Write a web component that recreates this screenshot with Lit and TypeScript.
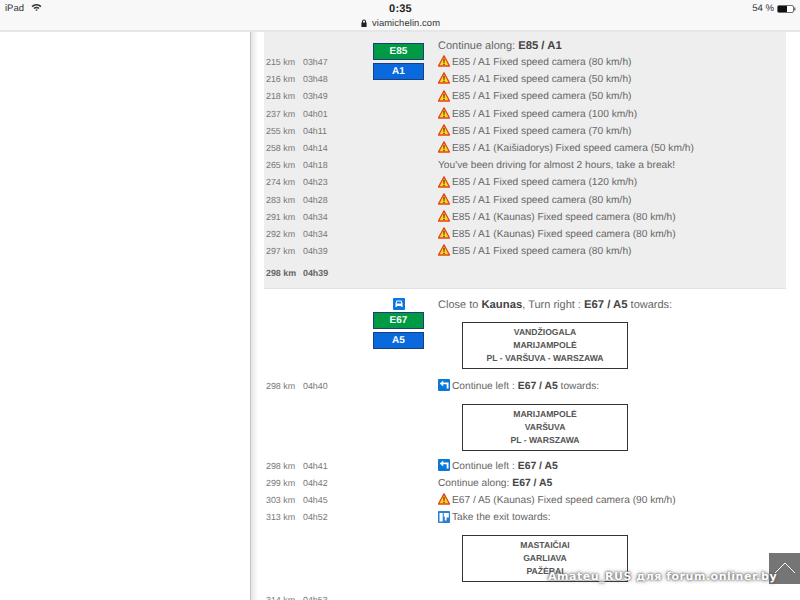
import { LitElement, html, css, svg } from "lit";
import { customElement } from "lit/decorators.js";

const warn = html`<svg class="ic" viewBox="0 0 12 12"><path d="M6 .8 11.5 11H.5Z" fill="#ffd81e" stroke="#e8431a" stroke-width="1.3" stroke-linejoin="round"/><path d="M5.4 3.8h1.2l-.2 4.2h-.8ZM5.4 8.8h1.2v1.2H5.4Z" fill="#222"/></svg>`;
const turn = html`<svg class="ic" viewBox="0 0 12 12"><rect width="12" height="12" rx="1" fill="#0a78d6"/><path d="M9.6 9.5V4.4H4.5" fill="none" stroke="#fff" stroke-width="1.9"/><path d="M5.2 1.4 1.8 4.4l3.4 3Z" fill="#fff"/></svg>`;
const exit = html`<svg class="ic" viewBox="0 0 12 12"><rect width="12" height="12" rx="1" fill="#2a80cf"/><path d="M1.5 2h3.2v8.5H1.5ZM5.8 2h5v4.5H8.5v3H6.8V5.2L5.8 6Z" fill="#fff"/></svg>`;
const car = svg`<rect width="12" height="12" rx="1" fill="#0a78e0"/><path d="M3.5 2.5h5l1 3v3.5H8.2V8H3.8v1H2.5V5.5Z" fill="#fff"/><path d="M4.2 3.5h3.6l.5 2H3.7Z" fill="#0a78e0"/>`;

type Row = { km?: string; t?: string; ic?: unknown; body?: unknown; big?: boolean; bold?: boolean; sign?: string[]; h?: number; pad?: [number, number] };

const cam = (s: string, km: string, t: string): Row => ({ km, t, ic: warn, body: `E85 / A1 ${s}` });

const top: Row[] = [
  { big: true, body: html`Continue along: <b>E85 / A1</b>`, h: 15 },
  cam("Fixed speed camera (80 km/h)", "215 km", "03h47"),
  cam("Fixed speed camera (50 km/h)", "216 km", "03h48"),
  cam("Fixed speed camera (50 km/h)", "218 km", "03h49"),
  cam("Fixed speed camera (100 km/h)", "237 km", "04h01"),
  cam("Fixed speed camera (70 km/h)", "255 km", "04h11"),
  cam("(Kaišiadorys) Fixed speed camera (50 km/h)", "258 km", "04h14"),
  { km: "265 km", t: "04h18", body: "You've been driving for almost 2 hours, take a break!" },
  cam("Fixed speed camera (120 km/h)", "274 km", "04h23"),
  cam("Fixed speed camera (80 km/h)", "283 km", "04h28"),
  cam("(Kaunas) Fixed speed camera (80 km/h)", "291 km", "04h34"),
  cam("(Kaunas) Fixed speed camera (80 km/h)", "292 km", "04h34"),
  cam("Fixed speed camera (80 km/h)", "297 km", "04h39"),
  { km: "298 km", t: "04h39", bold: true, h: 26 },
];

const second: Row[] = [
  { big: true, body: html`Close to <b>Kaunas</b>, Turn right : <b>E67 / A5</b> towards:`, sign: ["VANDŽIOGALA", "MARIJAMPOLĖ", "PL - VARŠUVA - WARSZAWA"], pad: [7, 9] },
  { km: "298 km", t: "04h40", ic: turn, body: html`Continue left : <b>E67 / A5</b> towards:`, sign: ["MARIJAMPOLĖ", "VARŠUVA", "PL - WARSZAWA"], pad: [9, 7] },
  { km: "298 km", t: "04h41", ic: turn, body: html`Continue left : <b>E67 / A5</b>` },
  { km: "299 km", t: "04h42", body: html`Continue along: <b>E67 / A5</b>` },
  { km: "303 km", t: "04h45", ic: warn, body: "E67 / A5 (Kaunas) Fixed speed camera (90 km/h)" },
  { km: "313 km", t: "04h52", ic: exit, body: "Take the exit towards:", sign: ["MASTAIČIAI", "GARLIAVA", "PAŽĖRAI"], pad: [8, 10] },
  { km: "314 km", t: "04h53" },
];

@customElement("app-root")
export class AppRoot extends LitElement {
  static styles = css`
    :host { display: block; width: 800px; height: 600px; position: relative; overflow: hidden; background: #fff;
      font-family: "Liberation Sans", Arial, sans-serif; color: #666; text-rendering: geometricPrecision; }
    .status { height: 27px; background: #f8f8f8; border-bottom: 2px solid #e6e6e6; display: grid; grid-template-columns: 1fr auto 1fr; padding: 3px 4px 0 5px; color: #333; }
    .left { display: flex; gap: 7px; align-items: flex-start; font-size: 9.5px; line-height: 11px; }
    .mid { text-align: center; }
    .clock { font-size: 11px; font-weight: bold; line-height: 12px; color: #222; letter-spacing: .2px; }
    .url { font-size: 9.4px; line-height: 12px; margin-top: 2px; display: flex; align-items: center; justify-content: center; gap: 5px; color: #333; letter-spacing: .1px; }
    .right { display: flex; justify-content: flex-end; align-items: flex-start; gap: 3px; font-size: 9.6px; line-height: 11px; }
    .body { display: flex; height: 568px; }
    .side { width: 250px; flex: none; background: #fff; }
    .main { flex: 1; padding: 0 14px 0 13px; border-left: 1px solid #c4c4c4; background: linear-gradient(to right, #e4e4e4, #fff 7px); min-width: 0; }
    .sec { display: grid; grid-template-columns: 39px 70px 65px 1fr; grid-auto-rows: auto; }
    .grey { background: #eee; border-bottom: 1px solid #e2e2e2; padding: 7px 0 2px; }
    .plain { padding: 8px 0 0; }
    .km, .time { font-size: 8.9px; line-height: 17.2px; color: #777; }
    .km { padding-left: 2px; }
    .strong { font-weight: bold; color: #666; }
    .roads { grid-column: 3; display: flex; flex-direction: column; gap: 3px; width: 51px; align-items: center; }
    .grey .roads { padding-top: 4px; }
    .plain .roads { padding-top: 1px; }
    .shield { width: 51px; height: 17px; box-sizing: border-box; border: 1px solid #1c3f7c; color: #fff; font-size: 10px; font-weight: bold; line-height: 15px; text-align: center; }
    .g { background: #009a44; }
    .b { background: #0a69dc; }
    .car { width: 12px; height: 12px; margin-bottom: -1px; display: block; }
    .txt { grid-column: 4; font-size: 10.2px; line-height: 17.2px; display: flex; align-items: center; gap: 2px; white-space: nowrap; height: 17.2px; }
    .txt b { color: #444; font-size: 10.4px; }
    .big { font-size: 11px; }
    .big b { font-size: 11.3px; }
    .ic { width: 12px; height: 12px; flex: none; margin-top: -3px; }
    .signcell { grid-column: 4; padding-left: 24px; }
    .sign { width: 166px; height: 47px; box-sizing: border-box; border: 1px solid #333; background: #fff; padding-top: 3px; text-align: center; font-size: 8.6px; font-weight: bold; line-height: 13.3px; color: #555; }
    .up { position: absolute; left: 769px; top: 553px; width: 31px; height: 31px; background: #757575; }
    .up svg { display: block; }
    .mark { position: absolute; left: 548px; top: 569px; font-family: "DejaVu Sans", sans-serif; font-weight: bold; font-size: 11px; line-height: 16px; color: #fff; white-space: nowrap; letter-spacing: .52px;
      text-shadow: 0 0 2px #444, 0 0 4px #666; }
  `;

  private renderRows(rows: Row[], start = 1) {
    let r = start;
    return rows.map((x) => {
      const row = r;
      r += x.sign ? 2 : 1;
      const h = x.h ? `height:${x.h}px;line-height:${x.h}px` : "";
      const pad = x.pad ?? [9, 9];
      return html`
        ${x.km ? html`<div class="km ${x.bold ? "strong" : ""}" style="grid-row:${row};grid-column:1;${h}">${x.km}</div>
          <div class="time ${x.bold ? "strong" : ""}" style="grid-row:${row};grid-column:2;${h}">${x.t}</div>` : ""}
        ${x.body ? html`<div class="txt ${x.big ? "big" : ""}" style="grid-row:${row};${h}">${x.ic ?? ""}<span>${x.body}</span></div>` : ""}
        ${x.sign ? html`<div class="signcell" style="grid-row:${row + 1};padding-top:${pad[0]}px;padding-bottom:${pad[1]}px"><div class="sign">${x.sign.map((l) => html`<div>${l}</div>`)}</div></div>` : ""}
      `;
    });
  }

  render() {
    return html`
      <div class="status">
        <div class="left"><span>iPad</span>
          <svg width="11" height="9" viewBox="0 0 11 9"><path d="M.5 3a7 7 0 0 1 10 0L9.4 4.2a5.4 5.4 0 0 0-7.8 0ZM2.5 5a4.2 4.2 0 0 1 6 0L7.4 6.1a2.7 2.7 0 0 0-3.8 0ZM4.4 6.9a1.5 1.5 0 0 1 2.2 0L5.5 8Z" fill="#333"/></svg>
        </div>
        <div class="mid">
          <div class="clock">0:35</div>
          <div class="url"><svg width="6" height="8" viewBox="0 0 6 8"><path d="M1 3.5V2.4a2 2 0 0 1 4 0v1.1h.6V8H.4V3.5ZM2 3.5h2V2.4a1 1 0 0 0-2 0Z" fill="#222" fill-rule="evenodd"/></svg>viamichelin.com</div>
        </div>
        <div class="right"><span>54 %</span>
          <svg width="19" height="10" viewBox="0 0 19 10" style="margin-top:1px"><rect x=".5" y="1.5" width="16" height="7" rx="1.5" fill="#fff" stroke="#333" stroke-width=".7"/><rect x="1" y="2" width="9" height="6" fill="#111"/><path d="M17.3 3.5h1v3h-1Z" fill="#333"/></svg>
        </div>
      </div>
      <div class="body">
        <div class="side"></div>
        <div class="main">
          <div class="sec grey">
            <div class="roads" style="grid-row:1 / span 3">
              <div class="shield g">E85</div><div class="shield b">A1</div>
            </div>
            ${this.renderRows(top)}
          </div>
          <div class="sec plain">
            <div class="roads" style="grid-row:1 / span 2">
              <svg class="car" viewBox="0 0 12 12">${car}</svg>
              <div class="shield g">E67</div><div class="shield b">A5</div>
            </div>
            ${this.renderRows(second)}
          </div>
        </div>
      </div>
      <div class="up"><svg width="31" height="31" viewBox="0 0 31 31"><path d="M6 20 16 10l10 10" fill="none" stroke="#fff" stroke-width="1"/></svg></div>
      <div class="mark">Amateu_RUS для forum.onliner.by</div>
    `;
  }
}
